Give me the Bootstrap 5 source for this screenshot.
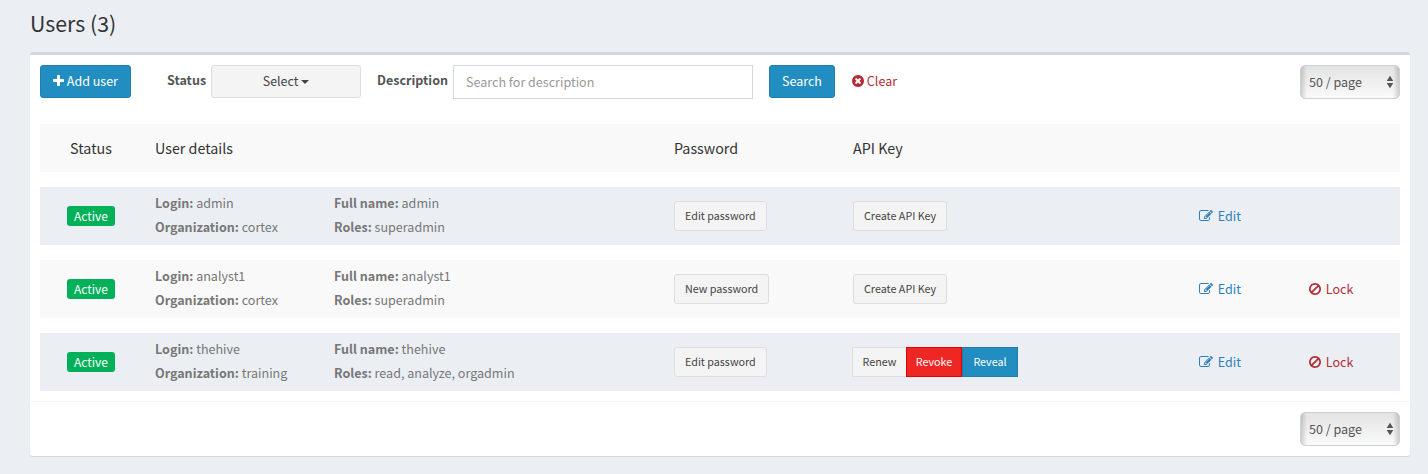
<!DOCTYPE html>
<html lang="en">
<head>
<meta charset="utf-8">
<meta name="viewport" content="width=device-width, initial-scale=1">
<title>Users</title>
<link href="https://cdn.jsdelivr.net/npm/bootstrap@5.3.0/dist/css/bootstrap.min.css" rel="stylesheet">
<style>
  body { background:#ebeff4; color:#333; font-family:"Noto Sans CJK SC",sans-serif; font-size:12.56px; line-height:20px; min-height:474px; overflow:hidden; }
  h1 { font-size:21.3px; line-height:26px; font-weight:400; padding-top:10px; margin-bottom:16px; }
  .page-wrap { padding:0 18px 0 30px; }
  .panel { background:#fff; border-top:3px solid #d2d6de; border-radius:3px; box-shadow:0 1px 1px rgba(0,0,0,.1); height:404px; }
  .panel-main { padding:10px; height:346px; }
  .panel-foot { border-top:1px solid #f4f4f4; padding:10px; }
  .toolbar { height:34px; margin-bottom:25px; }
  .btn { --bs-btn-font-size:12.5px; --bs-btn-line-height:20px; --bs-btn-padding-y:5px; --bs-btn-padding-x:12px; --bs-btn-border-radius:3px; height:33px; padding-bottom:7px; white-space:nowrap; }
  .btn-plain { --bs-btn-bg:#f4f4f4; --bs-btn-color:#444; --bs-btn-border-color:#ddd; }
  .btn-blue { --bs-btn-bg:#228dc0; --bs-btn-color:#fff; --bs-btn-border-color:#1f7fae; }
  .btn-red { --bs-btn-bg:#ee2624; --bs-btn-color:#fff; --bs-btn-border-color:#e80000; }
  .btn-mini { --bs-btn-font-size:10.75px; --bs-btn-line-height:18px; --bs-btn-padding-y:5px; --bs-btn-padding-x:10px; height:30px; padding-bottom:5px; }
  .add-btn { width:91px; margin-right:36px; }
  .find-btn { width:66px; }
  .lbl { font-weight:700; color:#555; line-height:30px; }
  .lbl-status { width:39px; }
  .lbl-desc { width:71px; }
  .status-pick { width:150px; margin-left:5px; margin-right:16px; }
  .caret { display:inline-block; border:4px solid transparent; border-top-color:#444; border-bottom:0; vertical-align:2px; }
  .search-input { width:300px; height:34px; margin-left:5px; margin-right:16px; border:1px solid #d2d6de; border-radius:0; padding:5px 12px 7px; font-size:12.56px; line-height:20px; }
  .search-input::placeholder { color:#999; opacity:1; }
  .clear-link { margin-left:16px; line-height:31px; }
  .clear-link .ico { margin-right:-1px; }
  .page-pick { width:100px; height:34px; border:1px solid #ccd0db; border-radius:5px; color:#555; padding:0 5px 0 8px;
    background:linear-gradient(90deg,rgba(0,0,0,.16),rgba(0,0,0,0) 6px,rgba(0,0,0,0) 92px,rgba(0,0,0,.16)),linear-gradient(#e3e3e3,#fafafa); }
  .user-grid { display:grid; grid-template-columns:115px 179px 340px 179px 346px 110px 1fr; align-items:center; height:58px; margin-bottom:15px; background:#f9f9f9; color:#777; line-height:24px; white-space:nowrap; }
  .user-grid.shade { background:#ebeff4; }
  .user-grid.grid-head { height:48px; color:#333; font-size:14.3px; }
  .facts { padding-bottom:2px; }
  .state { width:102px; text-align:center; }
  .pill { display:block; background:#00b159; color:#fff; border-radius:3px; width:48px; height:20px; font-size:12px; line-height:19px; margin:0 auto; }
  .ico { fill:currentColor; width:14px; height:14px; vertical-align:-2px; }
  .ico-plus { width:11px; }
  .ico-edit { margin-right:2px; }
  .ico-ban { margin-left:-1px; margin-right:1px; }
  .key-set { margin-left:-1px; }
  .key-set .btn { width:56px; padding-left:0; padding-right:0; }
  .key-set .btn:first-child { width:55px; margin-right:-1px; }
  .c-red { color:#b32d36; }
  .c-blue { color:#2a7fbf; }
</style>
</head>
<body>
<main class="container-fluid page-wrap">
  <h1>Users (3)</h1>
  <section class="panel">
    <div class="panel-main">
      <div class="toolbar d-flex align-items-start">
        <button class="btn btn-blue add-btn"><svg class="ico ico-plus" viewBox="192 128 1408 1536"><path d="M1600 736v192q0 40-28 68t-68 28h-416v416q0 40-28 68t-68 28h-192q-40 0-68-28t-28-68v-416h-416q-40 0-68-28t-28-68v-192q0-40 28-68t68-28h416v-416q0-40 28-68t68-28h192q40 0 68 28t28 68v416h416q40 0 68 28t28 68z"/></svg> Add user</button>
        <span class="lbl lbl-status">Status</span>
        <button class="btn btn-plain status-pick">Select <span class="caret"></span></button>
        <span class="lbl lbl-desc">Description</span>
        <input class="form-control search-input" placeholder="Search for description">
        <button class="btn btn-blue find-btn px-0">Search</button>
        <a class="c-red text-decoration-none clear-link"><svg class="ico" viewBox="0 0 1792 1792"><path d="M1277 1122q0-26-19-45l-181-181 181-181q19-19 19-45 0-27-19-46l-90-90q-19-19-46-19-26 0-45 19l-181 181-181-181q-19-19-45-19-27 0-46 19l-90 90q-19 19-19 46 0 26 19 45l181 181-181 181q-19 19-19 45 0 27 19 46l90 90q19 19 46 19 26 0 45-19l181-181 181 181q19 19 45 19 27 0 46-19l90-90q19-19 19-46zm387-226q0 209-103 385.5t-279.5 279.5-385.5 103-385.5-103-279.5-279.5-103-385.5 103-385.5 279.5-279.5 385.5-103 385.5 103 279.5 279.5 103 385.5z"/></svg> Clear</a>
        <div class="page-pick ms-auto d-flex align-items-center justify-content-between"><span>50 / page</span><svg width="8" height="14" viewBox="0 0 8 14" fill="#555"><path d="M.7 6 4 .8 7.3 6zM.7 8H7.3L4 13.2z"/></svg></div>
      </div>
      <div class="user-grid grid-head"><div class="state">Status</div><div>User details</div><div></div><div>Password</div><div>API Key</div></div>
      <div class="user-grid shade">
        <div class="state"><span class="pill">Active</span></div>
        <div class="facts"><b>Login:</b> admin<br><b>Organization:</b> cortex</div>
        <div class="facts"><b>Full name:</b> admin<br><b>Roles:</b> superadmin</div>
        <div><button class="btn btn-plain btn-mini">Edit password</button></div>
        <div><button class="btn btn-plain btn-mini">Create API Key</button></div>
        <div class="c-blue"><svg class="ico ico-edit" viewBox="0 0 1792 1792"><use href="#edit"/></svg> Edit</div>
      </div>
      <div class="user-grid">
        <div class="state"><span class="pill">Active</span></div>
        <div class="facts"><b>Login:</b> analyst1<br><b>Organization:</b> cortex</div>
        <div class="facts"><b>Full name:</b> analyst1<br><b>Roles:</b> superadmin</div>
        <div><button class="btn btn-plain btn-mini">New password</button></div>
        <div><button class="btn btn-plain btn-mini">Create API Key</button></div>
        <div class="c-blue"><svg class="ico ico-edit" viewBox="0 0 1792 1792"><use href="#edit"/></svg> Edit</div>
        <div class="c-red"><svg class="ico ico-ban" viewBox="0 0 1792 1792"><use href="#ban"/></svg> Lock</div>
      </div>
      <div class="user-grid shade mb-0">
        <div class="state"><span class="pill">Active</span></div>
        <div class="facts"><b>Login:</b> thehive<br><b>Organization:</b> training</div>
        <div class="facts"><b>Full name:</b> thehive<br><b>Roles:</b> read, analyze, orgadmin</div>
        <div><button class="btn btn-plain btn-mini">Edit password</button></div>
        <div class="d-flex key-set"><button class="btn btn-plain btn-mini rounded-0">Renew</button><button class="btn btn-red btn-mini rounded-0">Revoke</button><button class="btn btn-blue btn-mini rounded-0">Reveal</button></div>
        <div class="c-blue"><svg class="ico ico-edit" viewBox="0 0 1792 1792"><use href="#edit"/></svg> Edit</div>
        <div class="c-red"><svg class="ico ico-ban" viewBox="0 0 1792 1792"><use href="#ban"/></svg> Lock</div>
      </div>
    </div>
    <div class="panel-foot">
      <div class="page-pick ms-auto d-flex align-items-center justify-content-between"><span>50 / page</span><svg width="8" height="14" viewBox="0 0 8 14" fill="#555"><path d="M.7 6 4 .8 7.3 6zM.7 8H7.3L4 13.2z"/></svg></div>
    </div>
  </section>
</main>
<svg class="d-none"><defs>
  <path id="edit" d="M888 1184l116-116-152-152-116 116v56h96v96h56zm440-720q-16-16-33 1l-350 350q-17 17-1 33t33-1l350-350q17-17 1-33zm80 594v190q0 119-84.5 203.5t-203.5 84.5h-832q-119 0-203.5-84.5t-84.5-203.5v-832q0-119 84.5-203.5t203.5-84.5h832q63 0 117 25 15 7 18 23 3 17-9 29l-49 49q-14 14-32 8-23-6-45-6h-832q-66 0-113 47t-47 113v832q0 66 47 113t113 47h832q66 0 113-47t47-113v-126q0-13 9-22l64-64q15-15 35-7t20 29zm-96-738l288 288-672 672h-288v-288zm444 132l-92 92-288-288 92-92q28-28 68-28t68 28l152 152q28 28 28 68t-28 68z"/>
  <path id="ban" d="M1440 893q0-161-87-295l-754 753q137 89 297 89 111 0 211.5-43.5t173.5-116.5 116-174.5 43-212.5zm-999 299l755-754q-135-91-300-91-148 0-273 73t-198 199-73 274q0 162 89 299zm1223-299q0 157-61 300t-163.5 246-245 164-298.5 61-298.5-61-245-164-163.5-246-61-300 61-299.5 163.5-245.5 245-164 298.5-61 298.5 61 245 164 163.5 245.5 61 299.5z"/>
</defs></svg>
<script src="https://cdn.jsdelivr.net/npm/bootstrap@5.3.0/dist/js/bootstrap.bundle.min.js"></script>
</body>
</html>
